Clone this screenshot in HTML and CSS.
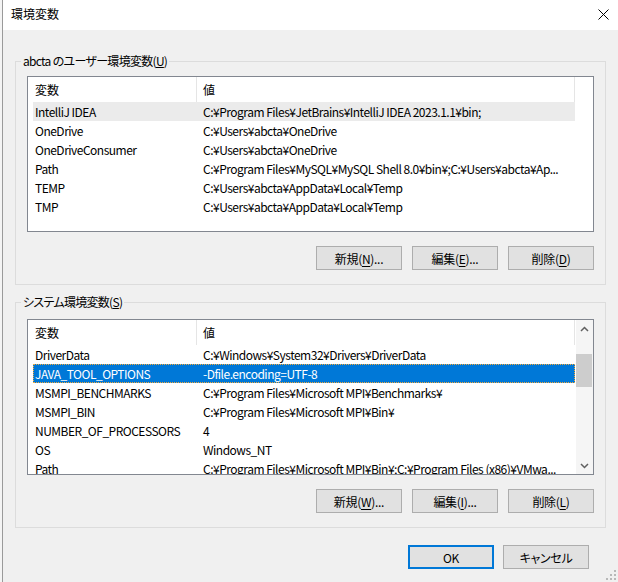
FILE: index.html
```html
<!DOCTYPE html>
<html lang="ja">
<head>
  <meta charset="UTF-8">
  <title>環境変数</title>
  <link rel="stylesheet" href="styles.css">
</head>
<body>
  <div class="dialog">
    <div class="title-bar">
      <span class="title-text">環境変数</span>
      <svg class="close-icon" width="11" height="11" viewBox="0 0 11 11">
        <path d="M0.5 0.5 L10.5 10.5 M10.5 0.5 L0.5 10.5" stroke="#000" stroke-width="1" fill="none"/>
      </svg>
    </div>

    <fieldset class="group">
      <legend class="group-label">abcta のユーザー環境変数(<u>U</u>)</legend>
      <div class="list">
        <div class="list-body">
          <div class="list-header">
            <div class="cell name">変数</div>
            <div class="cell value">値</div>
          </div>
          <div class="row inactive-selected">
            <div class="cell name">IntelliJ IDEA</div>
            <div class="cell value">C:¥Program Files¥JetBrains¥IntelliJ IDEA 2023.1.1¥bin;</div>
          </div>
          <div class="row">
            <div class="cell name">OneDrive</div>
            <div class="cell value">C:¥Users¥abcta¥OneDrive</div>
          </div>
          <div class="row">
            <div class="cell name">OneDriveConsumer</div>
            <div class="cell value">C:¥Users¥abcta¥OneDrive</div>
          </div>
          <div class="row">
            <div class="cell name">Path</div>
            <div class="cell value">C:¥Program Files¥MySQL¥MySQL Shell 8.0¥bin¥;C:¥Users¥abcta¥Ap...</div>
          </div>
          <div class="row">
            <div class="cell name">TEMP</div>
            <div class="cell value">C:¥Users¥abcta¥AppData¥Local¥Temp</div>
          </div>
          <div class="row">
            <div class="cell name">TMP</div>
            <div class="cell value">C:¥Users¥abcta¥AppData¥Local¥Temp</div>
          </div>
        </div>
      </div>
      <div class="button-row">
        <button class="btn">新規(<u>N</u>)...</button>
        <button class="btn">編集(<u>E</u>)...</button>
        <button class="btn">削除(<u>D</u>)</button>
      </div>
    </fieldset>

    <fieldset class="group group-system">
      <legend class="group-label">システム環境変数(<u>S</u>)</legend>
      <div class="list">
        <div class="list-body">
          <div class="list-header">
            <div class="cell name">変数</div>
            <div class="cell value">値</div>
          </div>
          <div class="row">
            <div class="cell name">DriverData</div>
            <div class="cell value">C:¥Windows¥System32¥Drivers¥DriverData</div>
          </div>
          <div class="row selected">
            <div class="cell name">JAVA_TOOL_OPTIONS</div>
            <div class="cell value">-Dfile.encoding=UTF-8</div>
          </div>
          <div class="row">
            <div class="cell name">MSMPI_BENCHMARKS</div>
            <div class="cell value">C:¥Program Files¥Microsoft MPI¥Benchmarks¥</div>
          </div>
          <div class="row">
            <div class="cell name">MSMPI_BIN</div>
            <div class="cell value">C:¥Program Files¥Microsoft MPI¥Bin¥</div>
          </div>
          <div class="row">
            <div class="cell name">NUMBER_OF_PROCESSORS</div>
            <div class="cell value">4</div>
          </div>
          <div class="row">
            <div class="cell name">OS</div>
            <div class="cell value">Windows_NT</div>
          </div>
          <div class="row">
            <div class="cell name">Path</div>
            <div class="cell value">C:¥Program Files¥Microsoft MPI¥Bin¥;C:¥Program Files (x86)¥VMwa...</div>
          </div>
        </div>
        <div class="scrollbar">
          <div class="scroll-arrow">
            <svg width="9" height="6" viewBox="0 0 9 6">
              <path d="M1 5 L4.5 1.5 L8 5" stroke="#606060" stroke-width="1.5" fill="none"/>
            </svg>
          </div>
          <div class="scroll-track">
            <div class="scroll-thumb"></div>
          </div>
          <div class="scroll-arrow">
            <svg width="9" height="6" viewBox="0 0 9 6">
              <path d="M1 1 L4.5 4.5 L8 1" stroke="#606060" stroke-width="1.5" fill="none"/>
            </svg>
          </div>
        </div>
      </div>
      <div class="button-row">
        <button class="btn">新規(<u>W</u>)...</button>
        <button class="btn">編集(<u>I</u>)...</button>
        <button class="btn">削除(<u>L</u>)</button>
      </div>
    </fieldset>

    <div class="dialog-buttons">
      <button class="btn btn-default">OK</button>
      <button class="btn">キャンセル</button>
    </div>

    <svg class="size-grip" width="12" height="12" viewBox="0 0 12 12">
      <rect x="9" y="1" width="2" height="2" fill="#b8b8b8"/>
      <rect x="5" y="5" width="2" height="2" fill="#b8b8b8"/>
      <rect x="9" y="5" width="2" height="2" fill="#b8b8b8"/>
      <rect x="1" y="9" width="2" height="2" fill="#b8b8b8"/>
      <rect x="5" y="9" width="2" height="2" fill="#b8b8b8"/>
      <rect x="9" y="9" width="2" height="2" fill="#b8b8b8"/>
    </svg>
  </div>
</body>
</html>
```

FILE: styles.css
```css
* {
  margin: 0;
  padding: 0;
  box-sizing: border-box;
}

body {
  font-family: "Noto Sans CJK JP", "Noto Sans", sans-serif;
  font-size: 12px;
  font-feature-settings: "palt";
  color: #000;
  background-color: #f4f4f4;
  width: 618px;
  height: 582px;
  overflow: hidden;
}

.dialog {
  position: relative;
  display: flex;
  flex-direction: column;
  width: 616px;
  height: 582px;
  margin-left: 2px;
  border-left: 1px solid #9a9a9a;
  background-color: #f0f0f0;
}

.title-bar {
  display: flex;
  justify-content: space-between;
  align-items: center;
  height: 30px;
  padding: 0 9px 2px 8px;
  background-color: #fff;
}

.title-text {
  font-size: 12px;
  line-height: 16px;
}

.close-icon {
  display: block;
}

.group {
  margin: 22px 12px 0;
  padding: 6px 11px 14px;
  border: 1px solid #dcdcdc;
  min-width: 0;
}

.group-system {
  margin-top: 8px;
  padding-top: 8px;
}

.group-label {
  margin-left: -6px;
  padding: 0 2px;
  line-height: 18px;
  letter-spacing: -0.7px;
}

.list {
  display: flex;
  height: 156px;
  border: 1px solid #828790;
  background-color: #fff;
  overflow: hidden;
}

.list-body {
  flex: 1;
  padding-left: 5px;
  overflow: hidden;
}

.list-header,
.row {
  display: flex;
  width: 542px;
}

.list-header {
  height: 25px;
  line-height: 25px;
}

.list-header .cell {
  border-right: 1px solid #e5e5e5;
}

.row {
  height: 19px;
  line-height: 19px;
  letter-spacing: -0.5px;
}

.cell {
  white-space: nowrap;
  overflow: hidden;
}

.cell.name {
  width: 164px;
  padding-left: 2px;
}

.cell.value {
  width: 378px;
  padding-left: 6px;
}

.inactive-selected {
  background-color: #ebebeb;
}

.selected {
  background-color: #0078d7;
  color: #fff;
  outline: 1px dotted #f2a93b;
  outline-offset: -1px;
}

.scrollbar {
  display: flex;
  flex-direction: column;
  width: 17px;
  margin-left: 1px;
  background-color: #f5f5f5;
}

.scroll-arrow {
  display: flex;
  justify-content: center;
  align-items: center;
  height: 17px;
}

.scroll-track {
  flex: 1;
  padding-top: 17px;
}

.scroll-thumb {
  height: 33px;
  margin-right: 1px;
  background-color: #cdcdcd;
}

.button-row {
  display: flex;
  justify-content: flex-end;
  gap: 10px;
  margin-top: 14px;
}

.btn {
  width: 86px;
  height: 24px;
  font-family: inherit;
  font-size: 12px;
  font-feature-settings: "palt";
  letter-spacing: -0.3px;
  color: #000;
  background-color: #e1e1e1;
  border: 1px solid #adadad;
}

.btn u {
  text-decoration-thickness: 1px;
  text-underline-offset: 2px;
}

.btn-default {
  border: 2px solid #0078d7;
}

.dialog-buttons {
  display: flex;
  justify-content: flex-end;
  gap: 9px;
  margin-top: 17px;
  padding-right: 29px;
}

.size-grip {
  position: absolute;
  right: 1px;
  bottom: 1px;
}
```
